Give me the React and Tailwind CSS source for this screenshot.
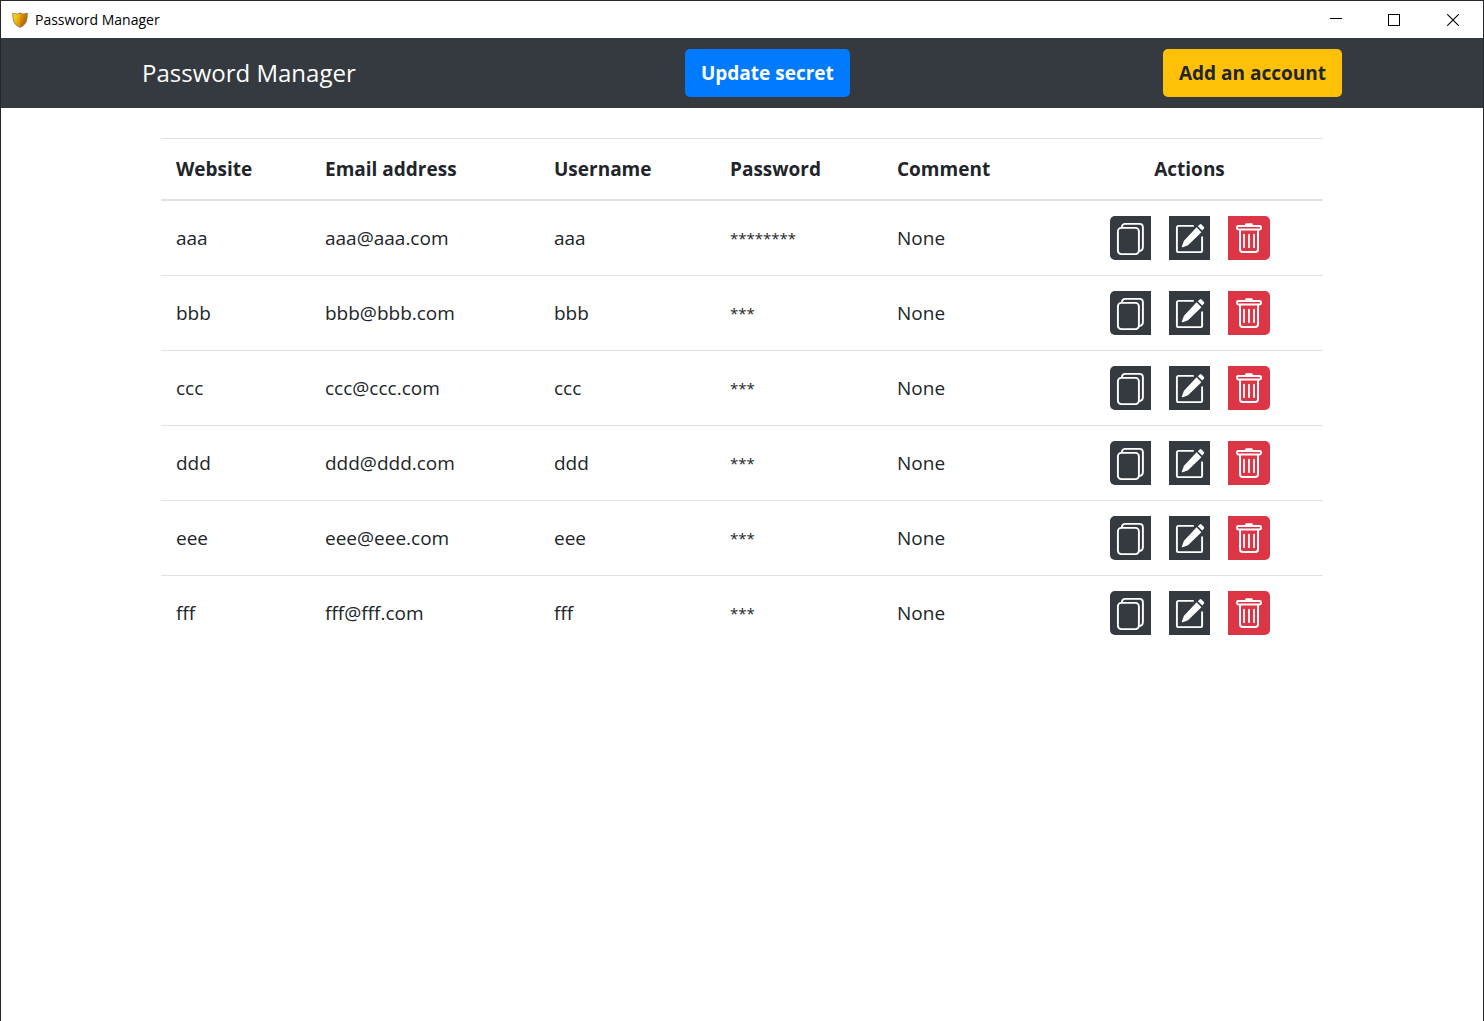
import React from "react";

const accounts = [
  { site: "aaa", email: "aaa@aaa.com", user: "aaa", password: "********" },
  { site: "bbb", email: "bbb@bbb.com", user: "bbb", password: "***" },
  { site: "ccc", email: "ccc@ccc.com", user: "ccc", password: "***" },
  { site: "ddd", email: "ddd@ddd.com", user: "ddd", password: "***" },
  { site: "eee", email: "eee@eee.com", user: "eee", password: "***" },
  { site: "fff", email: "fff@fff.com", user: "fff", password: "***" },
];

function ShieldIcon() {
  return (
    <svg width="16" height="16" viewBox="0 0 16 16" aria-hidden="true">
      <defs>
        <linearGradient id="shield-left" x1="0" y1="0" x2="1" y2="1">
          <stop offset="0" stopColor="#ffe81c" />
          <stop offset="1" stopColor="#d98a08" />
        </linearGradient>
        <linearGradient id="shield-right" x1="0" y1="0" x2="1" y2="1">
          <stop offset="0" stopColor="#e8a010" />
          <stop offset="1" stopColor="#9c4a00" />
        </linearGradient>
      </defs>
      <path d="M8 .8 5.5 2 2.5 1.6 .6 1.2 1 6.5C1.6 11 4 14 8 15.4Z" fill="url(#shield-left)" />
      <path d="M8 .8 10.5 2 13.5 1.6 15.4 1.2 15 6.5C14.4 11 12 14 8 15.4Z" fill="url(#shield-right)" />
      <path
        d="M8 .8 5.5 2 2.5 1.6 .6 1.2 1 6.5C1.6 11 4 14 8 15.4 12 14 14.4 11 15 6.5L15.4 1.2 13.5 1.6 10.5 2Z"
        fill="none"
        stroke="#8a6a50"
        strokeWidth="1"
        strokeOpacity=".75"
      />
    </svg>
  );
}

function CopyIcon() {
  return (
    <svg width="41" height="44" viewBox="0 0 41 44" fill="none" stroke="#fff" strokeWidth="1.9" aria-hidden="true">
      <rect x="7.9" y="11.9" width="21" height="26.2" rx="3.4" />
      <path d="M11.8 11.5C12 9.2 13.2 7.9 15.4 7.9H29.4C31.8 7.9 32.9 9.2 32.9 11.4V30.8C32.9 33.6 31.6 35 29.2 35.1" />
    </svg>
  );
}

function EditIcon() {
  return (
    <svg width="41" height="44" viewBox="0 0 41 44" fill="none" aria-hidden="true">
      <path
        d="M24 9.9H9.6Q7.9 9.9 7.9 11.6V34.4Q7.9 36.1 9.6 36.1H31.4Q33.1 36.1 33.1 34.4V21.2"
        stroke="#fff"
        strokeWidth="1.9"
        strokeLinecap="round"
      />
      <path d="M27.6 11.3 32.4 16.2 19 29.3 13.8 31.2Q12.4 31.6 12.9 30.2L15 24.8Z" fill="#fff" />
      <path d="M28.8 10.2 30.7 8.4Q31.6 7.6 32.5 8.5L34.9 11Q35.7 11.9 34.8 12.8L33.2 14.6Z" fill="#fff" />
    </svg>
  );
}

function TrashIcon() {
  return (
    <svg width="42" height="44" viewBox="0 0 42 44" fill="none" stroke="#fff" strokeWidth="2" strokeLinecap="round" aria-hidden="true">
      <rect x="9" y="10" width="24" height="3.4" rx="1.4" />
      <path d="M18.4 8.4H23.6" strokeWidth="2.4" />
      <path d="M12 14V33.2Q12 36 14.8 36H27.2Q30 36 30 33.2V14" />
      <path d="M16 18.6V31.2M21 18.6V31.2M26 18.6V31.2" strokeWidth="1.8" />
    </svg>
  );
}

function TitleBar() {
  return (
    <div className="flex h-[37px] items-center justify-between bg-white pl-[11px]">
      <div className="flex items-center gap-[7px] text-[14px] leading-5 text-black">
        <ShieldIcon />
        <span>Password Manager</span>
      </div>
      <div className="flex h-full">
        <button type="button" aria-label="Minimize" className="flex w-[58px] items-center justify-center">
          <svg width="12" height="12" viewBox="0 0 12 12" stroke="#000" shapeRendering="crispEdges">
            <path d="M0 4.5H12" />
          </svg>
        </button>
        <button type="button" aria-label="Maximize" className="flex w-[58px] items-center justify-center">
          <svg width="12" height="12" viewBox="0 0 12 12" fill="none" stroke="#000" shapeRendering="crispEdges">
            <rect x=".5" y=".5" width="11" height="11" />
          </svg>
        </button>
        <button type="button" aria-label="Close" className="flex w-[60px] items-center justify-center">
          <svg width="12" height="12" viewBox="0 0 12 12" stroke="#000" strokeWidth="1.1">
            <path d="M.2.2 11.8 11.8M11.8.2.2 11.8" />
          </svg>
        </button>
      </div>
    </div>
  );
}

export default function App() {
  return (
    <div className="flex min-h-screen flex-col border-x border-t border-[#24282c] bg-white font-['Open_Sans','Noto_Sans',sans-serif] text-[#212529]">
      <TitleBar />
      <header className="bg-[#343a40]">
        <nav className="mx-auto flex h-[70px] w-full max-w-[1200px] items-center justify-between">
          <a href="#" className="mr-4 text-2xl text-white">Password Manager</a>
          <button type="button" className="h-12 rounded-[5px] bg-[#007bff] px-4 text-[19px] leading-7 font-bold text-white">
            Update secret
          </button>
          <button type="button" className="h-12 rounded-[5px] bg-[#ffc107] px-4 text-[19px] leading-7 font-bold text-[#212529]">
            Add an account
          </button>
        </nav>
      </header>
      <main className="mx-auto w-full max-w-[1162px] pt-[30px]">
        <table className="w-full table-fixed border-separate border-spacing-0 text-left text-[19px] leading-7">
          <colgroup>
            <col className="w-[149px]" />
            <col className="w-[229px]" />
            <col className="w-[176px]" />
            <col className="w-[167px]" />
            <col className="w-[174px]" />
            <col />
          </colgroup>
          <thead>
            <tr className="h-[63px] [&>th]:border-t [&>th]:border-b-2 [&>th]:border-[#dee2e6] [&>th]:px-[15px]">
              <th scope="col">Website</th>
              <th scope="col">Email address</th>
              <th scope="col">Username</th>
              <th scope="col">Password</th>
              <th scope="col">Comment</th>
              <th scope="col" className="text-center">Actions</th>
            </tr>
          </thead>
          <tbody>
            {accounts.map((a) => (
              <tr key={a.site} className="[&>td]:border-[#dee2e6] [&>td]:p-[15px] [&:not(:first-child)>td]:border-t">
                <td>{a.site}</td>
                <td>{a.email}</td>
                <td>{a.user}</td>
                <td className="text-[15px]">{a.password}</td>
                <td>None</td>
                <td>
                  <div className="flex justify-center gap-[18px]">
                    <button type="button" aria-label={`Copy ${a.site}`} className="rounded-l-[5px] bg-[#343a40]">
                      <CopyIcon />
                    </button>
                    <button type="button" aria-label={`Edit ${a.site}`} className="bg-[#343a40]">
                      <EditIcon />
                    </button>
                    <button type="button" aria-label={`Delete ${a.site}`} className="rounded-r-[5px] bg-[#dc3545]">
                      <TrashIcon />
                    </button>
                  </div>
                </td>
              </tr>
            ))}
          </tbody>
        </table>
      </main>
    </div>
  );
}
